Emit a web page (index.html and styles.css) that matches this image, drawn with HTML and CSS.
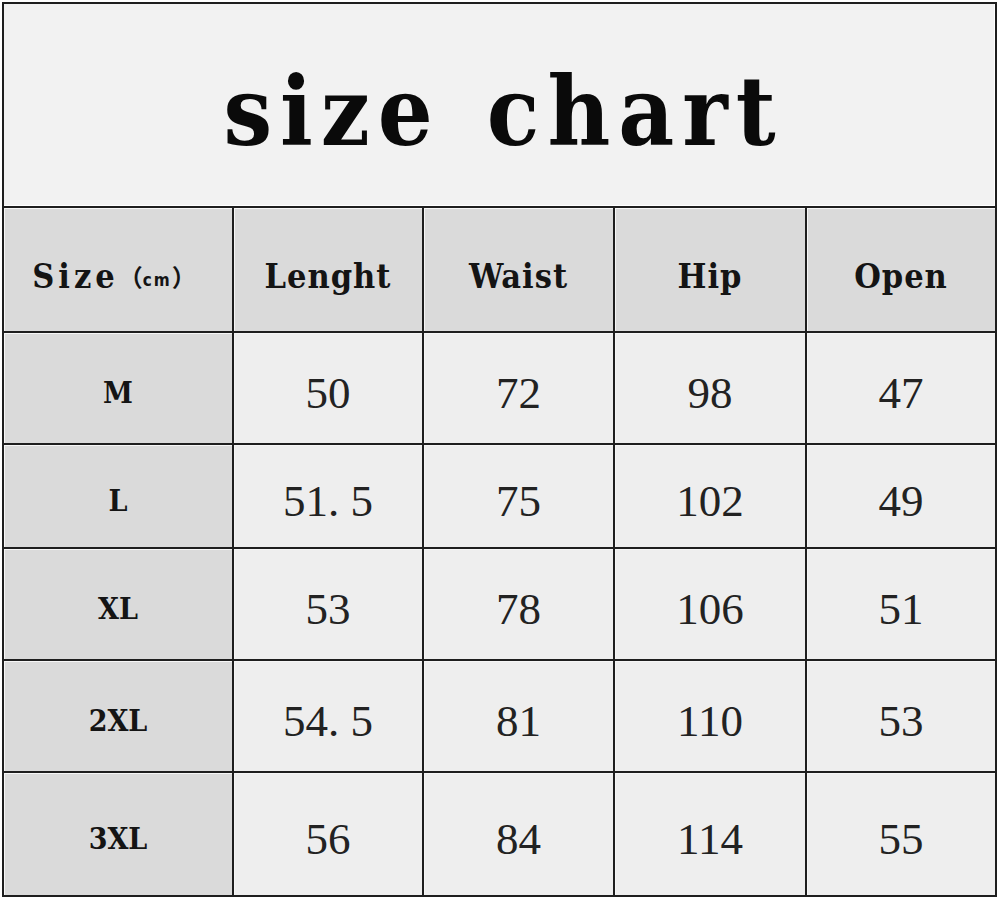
FILE: index.html
```html
<!DOCTYPE html>
<html>
<head>
<meta charset="utf-8">
<link rel="stylesheet" href="styles.css">
</head>
<body>
<div class="chart">
  <div class="title">size chart</div>

  <div class="cell head first">Size<span class="unit">（<span class="cm">cm</span>）</span></div>
  <div class="cell head">Lenght</div>
  <div class="cell head">Waist</div>
  <div class="cell head">Hip</div>
  <div class="cell head">Open</div>

  <div class="cell label">M</div>
  <div class="cell num">50</div>
  <div class="cell num">72</div>
  <div class="cell num">98</div>
  <div class="cell num">47</div>

  <div class="cell label">L</div>
  <div class="cell num">51<span class="dot">.</span>5</div>
  <div class="cell num">75</div>
  <div class="cell num">102</div>
  <div class="cell num">49</div>

  <div class="cell label">XL</div>
  <div class="cell num">53</div>
  <div class="cell num">78</div>
  <div class="cell num">106</div>
  <div class="cell num">51</div>

  <div class="cell label">2XL</div>
  <div class="cell num">54<span class="dot">.</span>5</div>
  <div class="cell num">81</div>
  <div class="cell num">110</div>
  <div class="cell num">53</div>

  <div class="cell label">3XL</div>
  <div class="cell num">56</div>
  <div class="cell num">84</div>
  <div class="cell num">114</div>
  <div class="cell num">55</div>
</div>
</body>
</html>
```

FILE: styles.css
```css
html, body {
  margin: 0;
  padding: 0;
  background: #ffffff;
}

.chart {
  margin: 2px 0 0 2px;
  width: 995px;
  box-sizing: border-box;
  padding: 2px;
  background: #1e1e1e;
  display: grid;
  grid-template-columns: 228px 188px 189px 190px 188px;
  grid-template-rows: 202px 123px 110px 102px 110px 110px 122px;
  gap: 2px;
}

.title {
  grid-column: 1 / -1;
  background: #f2f2f2;
  box-shadow: inset 0 -1px 0 #ffffff, inset -1px 0 0 #ffffff;
  display: flex;
  align-items: center;
  justify-content: center;
  padding-top: 12px;
  padding-left: 8px;
  box-sizing: border-box;
  font-family: "DejaVu Serif Condensed", "DejaVu Serif", serif;
  font-stretch: condensed;
  font-weight: bold;
  font-size: 96px;
  letter-spacing: 8px;
  word-spacing: 8px;
  color: #0a0a0a;
}

.cell {
  display: flex;
  align-items: center;
  justify-content: center;
  box-sizing: border-box;
  background: #eeeeee;
  color: #141414;
  box-shadow: inset 1px 1px 0 #f6f6f6;
}

.head {
  background: #dadada;
  font-family: "DejaVu Serif Condensed", "DejaVu Serif", serif;
  font-stretch: condensed;
  font-weight: bold;
  font-size: 34px;
  letter-spacing: 1px;
  padding-top: 12px;
}

.head.first {
  letter-spacing: 4px;
  padding-right: 8px;
}

.unit {
  font-family: "Noto Sans CJK SC", sans-serif;
  font-weight: bold;
  font-size: 24px;
  letter-spacing: 0;
}

.cm {
  font-family: "DejaVu Sans", sans-serif;
  font-weight: bold;
  font-size: 17px;
  letter-spacing: 2px;
}

.label {
  background: #dadada;
  font-family: "DejaVu Serif Condensed", "DejaVu Serif", serif;
  font-stretch: condensed;
  font-weight: bold;
  font-size: 30px;
  padding-top: 8px;
}

.num {
  font-family: "Liberation Serif", "Times New Roman", serif;
  font-size: 45px;
  color: #222222;
  padding-top: 10px;
}

.dot {
  display: inline-block;
  width: 0.5em;
  text-align: left;
}
```
